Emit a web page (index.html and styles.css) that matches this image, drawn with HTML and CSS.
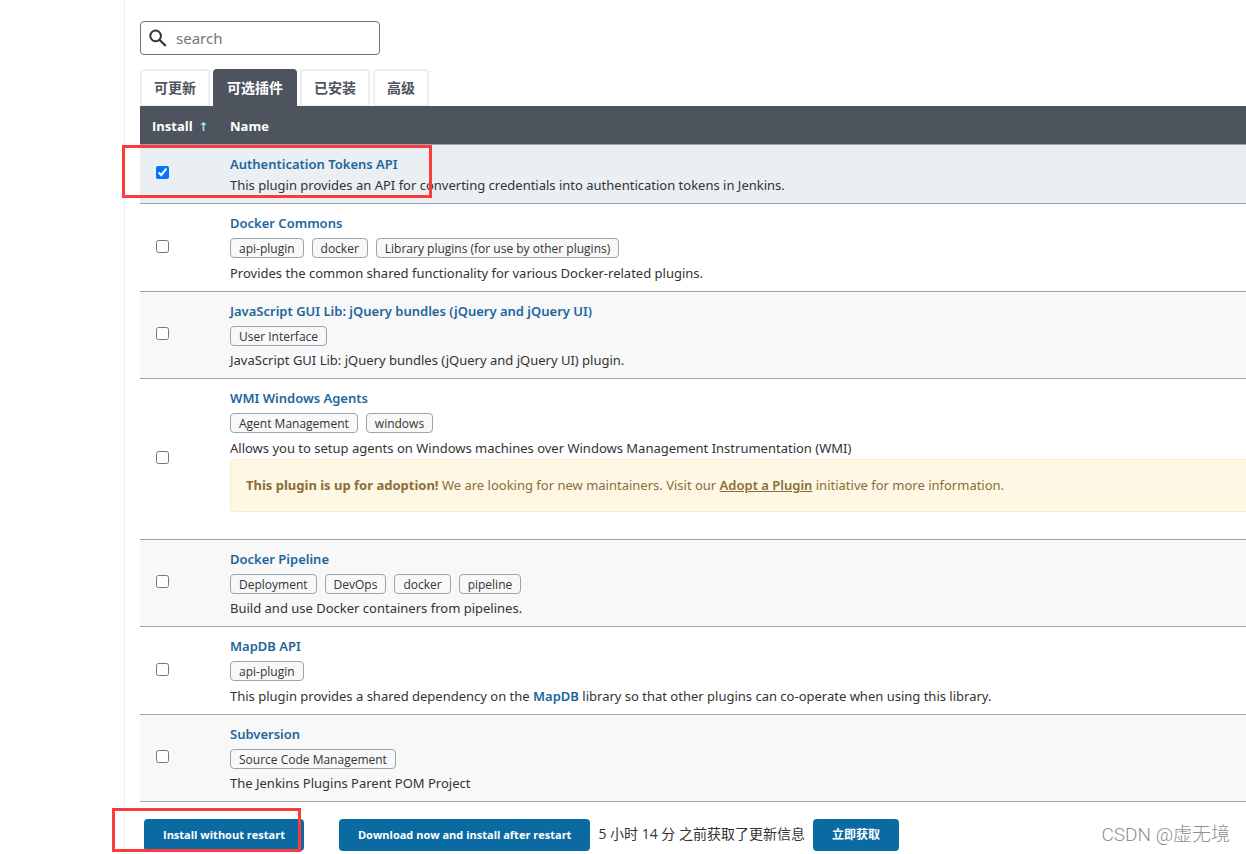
FILE: index.html
```html
<!DOCTYPE html>
<html lang="zh-CN">
<head>
<meta charset="utf-8">
<title>插件管理 [Jenkins]</title>
<link rel="stylesheet" href="styles.css">
</head>
<body>
<main class="main-panel">
  <label class="search">
    <svg class="search-icon" viewBox="0 0 18 18" aria-hidden="true"><circle cx="6.6" cy="6.9" r="5.3" fill="none" stroke="#333" stroke-width="2"/><path d="M10.4 10.7 16.8 17" stroke="#333" stroke-width="2.2" fill="none"/></svg>
    <input class="search-input" type="search" placeholder="search" aria-label="search">
  </label>

  <nav class="tabs">
    <a class="tab" href="#updates">可更新</a>
    <a class="tab tab-active" href="#available">可选插件</a>
    <a class="tab" href="#installed">已安装</a>
    <a class="tab" href="#advanced">高级</a>
  </nav>

  <table class="plugins">
    <thead>
      <tr><th class="col-install">Install <span class="sort">↑</span></th><th>Name</th></tr>
    </thead>
    <tbody>
      <tr class="selected">
        <td class="cell-check"><input class="check" type="checkbox" id="p1" aria-label="Authentication Tokens API" checked></td>
        <td><a class="name" href="#p1">Authentication Tokens API</a>
          <div class="desc">This plugin provides an API for converting credentials into authentication tokens in Jenkins.</div></td>
      </tr>
      <tr>
        <td class="cell-check"><input class="check" type="checkbox" id="p2" aria-label="Docker Commons"></td>
        <td><a class="name" href="#p2">Docker Commons</a>
          <div class="tags"><a class="tag" href="#t">api-plugin</a><a class="tag" href="#t">docker</a><a class="tag" href="#t">Library plugins (for use by other plugins)</a></div>
          <div class="desc">Provides the common shared functionality for various Docker-related plugins.</div></td>
      </tr>
      <tr>
        <td class="cell-check"><input class="check" type="checkbox" id="p3" aria-label="JavaScript GUI Lib"></td>
        <td><a class="name" href="#p3">JavaScript GUI Lib: jQuery bundles (jQuery and jQuery UI)</a>
          <div class="tags"><a class="tag" href="#t">User Interface</a></div>
          <div class="desc">JavaScript GUI Lib: jQuery bundles (jQuery and jQuery UI) plugin.</div></td>
      </tr>
      <tr>
        <td class="cell-check"><input class="check" type="checkbox" id="p4" aria-label="WMI Windows Agents"></td>
        <td><a class="name" href="#p4">WMI Windows Agents</a>
          <div class="tags"><a class="tag" href="#t">Agent Management</a><a class="tag" href="#t">windows</a></div>
          <div class="desc">Allows you to setup agents on Windows machines over Windows Management Instrumentation (WMI)</div>
          <div class="alert"><strong>This plugin is up for adoption!</strong> We are looking for new maintainers. Visit our <a class="alert-link" href="#adopt">Adopt a Plugin</a> initiative for more information.</div></td>
      </tr>
      <tr>
        <td class="cell-check"><input class="check" type="checkbox" id="p5" aria-label="Docker Pipeline"></td>
        <td><a class="name" href="#p5">Docker Pipeline</a>
          <div class="tags"><a class="tag" href="#t">Deployment</a><a class="tag" href="#t">DevOps</a><a class="tag" href="#t">docker</a><a class="tag" href="#t">pipeline</a></div>
          <div class="desc">Build and use Docker containers from pipelines.</div></td>
      </tr>
      <tr>
        <td class="cell-check"><input class="check" type="checkbox" id="p6" aria-label="MapDB API"></td>
        <td><a class="name" href="#p6">MapDB API</a>
          <div class="tags"><a class="tag" href="#t">api-plugin</a></div>
          <div class="desc">This plugin provides a shared dependency on the <a class="desc-link" href="#mapdb">MapDB</a> library so that other plugins can co-operate when using this library.</div></td>
      </tr>
      <tr>
        <td class="cell-check"><input class="check" type="checkbox" id="p7" aria-label="Subversion"></td>
        <td><a class="name" href="#p7">Subversion</a>
          <div class="tags"><a class="tag" href="#t">Source Code Management</a></div>
          <div class="desc">The Jenkins Plugins Parent POM Project</div></td>
      </tr>
    </tbody>
  </table>

  <footer class="actions">
    <button class="button button-first" type="button">Install without restart</button>
    <button class="button" type="button">Download now and install after restart</button>
    <span class="updated">5 小时 14 分 之前获取了更新信息</span>
    <button class="button button-refresh" type="button">立即获取</button>
    <span class="watermark">CSDN @虚无境</span>
  </footer>
</main>
<div class="marker marker-plugin"></div>
<div class="marker marker-install"></div>
</body>
</html>
```
FILE: styles.css
```css
* { box-sizing: border-box; }

body {
  margin: 0;
  position: relative;
  background: #fff;
  color: #333;
  font: 13px/21px "Noto Sans", "Noto Sans CJK SC", sans-serif;
}

a { text-decoration: none; }

.main-panel {
  margin-left: 124px;
  padding: 21px 0 3px 15px;
  border-left: 1px solid #e9eef1;
}

.search {
  display: flex;
  align-items: center;
  gap: 9px;
  width: 240px;
  height: 34px;
  padding: 0 8px;
  border: 1px solid #767676;
  border-radius: 4px;
}

.search-icon { width: 18px; height: 18px; flex: none; }

.search-input {
  flex: 1;
  min-width: 0;
  padding: 0;
  border: 0;
  outline: 0;
  background: none;
  color: #333;
  font: inherit;
  font-size: 15px;
}

.search-input::placeholder { color: #757575; }

.tabs {
  display: flex;
  gap: 3px;
  margin-top: 14px;
}

.tab {
  height: 37px;
  padding: 6px 12px;
  border: 2px solid #e9eff2;
  border-bottom-width: 1px;
  border-radius: 4px 4px 0 0;
  color: #4d545d;
  font-size: 14px;
  font-weight: 600;
  line-height: 22px;
}

.tab-active {
  border-color: #4d545d;
  background: #4d545d;
  color: #fff;
}

.plugins {
  width: 100%;
  border-collapse: separate;
  border-spacing: 0;
}

.plugins th {
  padding: 10px 0 7px 8px;
  border-bottom: 1px solid #98a6b0;
  background: #4d545d;
  color: #fff;
  font-family: "Open Sans", sans-serif;
  font-weight: 700;
  text-align: left;
}

.plugins .col-install { width: 82px; padding-left: 12px; }

.sort {
  margin-left: 2px;
  color: #a8e4ff;
  font: 700 12px/12px "DejaVu Sans", sans-serif;
}

.plugins td {
  padding: 9px 0 7px 8px;
  border-bottom: 1px solid #98a6b0;
  vertical-align: middle;
}

.plugins .cell-check { padding: 7px 0 10px 8px; }

.plugins tr:nth-child(odd) td { background: #f8f8f8; }
.plugins .selected:nth-child(odd) td { background: #e9eff2; }

.check {
  display: block;
  width: 13px;
  height: 13px;
  margin: 0 0 0 8px;
}

.name {
  display: block;
  color: #1d669c;
  font-weight: 600;
}

.tags {
  display: flex;
  gap: 8px;
  padding: 4px 0;
}

.plugins tr:nth-child(even) .tags { padding-bottom: 5px; }

.tag {
  height: 20px;
  padding: 0 8px;
  border: 1px solid #98a6b0;
  border-radius: 4px;
  background: #f8f8f8;
  color: #333;
  font-family: "Open Sans", sans-serif;
  font-size: 12px;
  font-weight: 500;
  line-height: 19px;
}

.desc-link { color: #1d669c; font-weight: 600; }

.alert {
  margin-bottom: 20px;
  padding: 15px;
  border: 1px solid #faebcc;
  border-right: 0;
  border-radius: 4px 0 0 4px;
  background: #fdf7e3;
  color: #8a6d3b;
}

.alert-link {
  color: #8a6d3b;
  font-weight: 600;
  text-decoration: underline;
}

.actions {
  display: flex;
  align-items: center;
  gap: 8px;
  padding: 17px 16px 0 4px;
}

.button {
  height: 32px;
  padding: 0 19px;
  border: 0;
  border-radius: 4px;
  background: #0b6aa2;
  color: #fff;
  font: 700 11px/20px "Open Sans", "Noto Sans CJK SC", sans-serif;
}

.button-first { margin-right: 27px; }

.button-refresh { font-size: 12px; }

.updated {
  padding-bottom: 3px;
  font-family: "Open Sans", "Noto Sans CJK SC", sans-serif;
  font-size: 14px;
}

.watermark {
  margin-left: auto;
  color: #909090;
  font: 300 19px/24px Roboto, "Noto Sans CJK SC", sans-serif;
}

.marker {
  position: absolute;
  border: 3px solid #fc3a3a;
}

.marker-plugin { left: 122px; top: 145px; width: 310px; height: 53px; }
.marker-install { left: 112px; top: 808px; width: 189px; height: 44px; }
```
